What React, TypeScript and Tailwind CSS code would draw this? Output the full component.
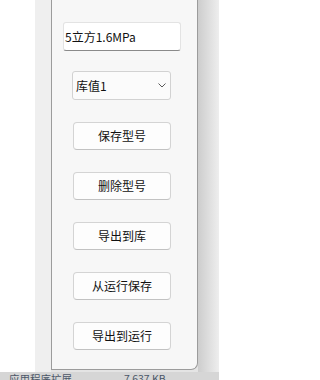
import React from 'react'

const font = { fontFamily: '"Noto Sans CJK SC", "Noto Sans", sans-serif' }

const buttons = ['保存型号', '删除型号', '导出到库', '从运行保存', '导出到运行']

const Chevron = () => (
  <svg width="8" height="5" viewBox="0 0 8 5" className="text-[#5a5a5a]">
    <path d="M0.5 0.5 L4 4 L7.5 0.5" fill="none" stroke="currentColor" strokeWidth="1" />
  </svg>
)

const Panel = () => (
  <div className="w-[147px] h-[370px] flex flex-col bg-[#f7f7f7] border-l border-r border-b border-[#9c9c9c] rounded-br-[7px]">
    <div className="mt-[22px] ml-[11px] w-[118px] h-[29px] flex items-center pl-[1px] bg-white border border-[#e3e3e3] border-b-[#8a8a8a] rounded-[3px] text-[12px] text-[#111]">
      5立方1.6MPa
    </div>
    <div className="mt-[20px] ml-[20px] w-[99px] h-[29px] flex items-center justify-between pl-[3px] pr-[4px] bg-[#fbfbfb] border border-[#d2d2d2] rounded-[3px] text-[12px] text-[#111]">
      <span>库值1</span>
      <Chevron />
    </div>
    <div className="mt-[22px] ml-[21px] flex flex-col gap-[22px]">
      {buttons.map((b) => (
        <button
          key={b}
          className="w-[98px] h-[28px] flex items-center justify-center bg-[#fdfdfd] border border-[#d4d4d4] border-b-[#c2c2c2] rounded-[4px] text-[12px] text-[#111]"
        >
          {b}
        </button>
      ))}
    </div>
  </div>
)

export default function App() {
  return (
    <div className="w-[219px] h-[380px] overflow-hidden flex flex-col bg-[#e4e4e4]" style={font}>
      <div className="h-[372px] flex">
        <div className="w-[35px] bg-white" />
        <div className="w-[16px] bg-[#efefef]" />
        <Panel />
        <div className="flex-1 bg-gradient-to-r from-[#cdcdcd] to-[#eeeeee]" />
      </div>
      <div className="h-[8px] flex items-start bg-[#d6d6d6] text-[10.5px] leading-[14px] text-[#4b5668]">
        <span className="ml-[9px]">应用程序扩展</span>
        <span className="ml-[52px]">7 637 KB</span>
      </div>
    </div>
  )
}
